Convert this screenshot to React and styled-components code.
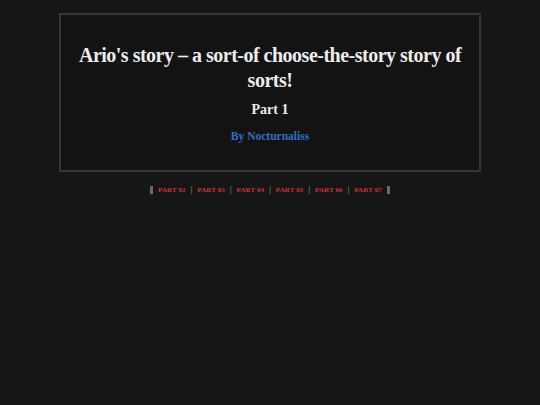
import styled, { createGlobalStyle } from 'styled-components'

const Global = createGlobalStyle`
  html, body { margin: 0; padding: 0; background: #161616; }
  body { font-family: "Liberation Serif", "DejaVu Serif", serif; }
`

const Page = styled.div`
  width: 540px;
  min-height: 405px;
  padding-top: 13px;
  box-sizing: border-box;
  display: flex;
  flex-direction: column;
  align-items: center;
`

const Header = styled.header`
  width: 422px;
  height: 159px;
  box-sizing: border-box;
  border: 2px solid #363636;
  background: #131313;
  display: flex;
  flex-direction: column;
  align-items: center;
  padding: 28px 8px 0;
  text-align: center;
`

const Title = styled.h1`
  margin: 0;
  font-size: 20px;
  line-height: 25px;
  font-weight: 700;
  color: #ececec;
  letter-spacing: -0.5px;
`

const Sub = styled.h2`
  margin: 9px 0 0;
  font-size: 14px;
  font-weight: 700;
  color: #ececec;
`

const Author = styled.a`
  margin-top: 12px;
  font-size: 11.5px;
  font-weight: 700;
  color: #2f6fc4;
  text-decoration: none;
`

const Nav = styled.nav`
  margin-top: 13px;
  display: flex;
  align-items: center;
  gap: 5px;
  font-size: 7px;
  font-weight: 700;
`

const Cap = styled.span`
  width: 3px;
  height: 8px;
  background: #6a6a6a;
`

const Link = styled.a`
  color: #c8353a;
  text-decoration: none;
  letter-spacing: 0.1px;
`

const Sep = styled.span`
  color: #bbbbbb;
  font-weight: 400;
  font-size: 8px;
`

const parts = ['02', '03', '04', '05', '06', '07']

export default function App() {
  return (
    <Page>
      <Global />
      <Header>
        <Title>Ario's story – a sort-of choose-the-story story of sorts!</Title>
        <Sub>Part 1</Sub>
        <Author href="#">By Nocturnaliss</Author>
      </Header>
      <Nav>
        <Cap />
        {parts.map((p, i) => (
          <>
            {i > 0 && <Sep>|</Sep>}
            <Link key={p} href="#">PART {p}</Link>
          </>
        ))}
        <Cap />
      </Nav>
    </Page>
  )
}
